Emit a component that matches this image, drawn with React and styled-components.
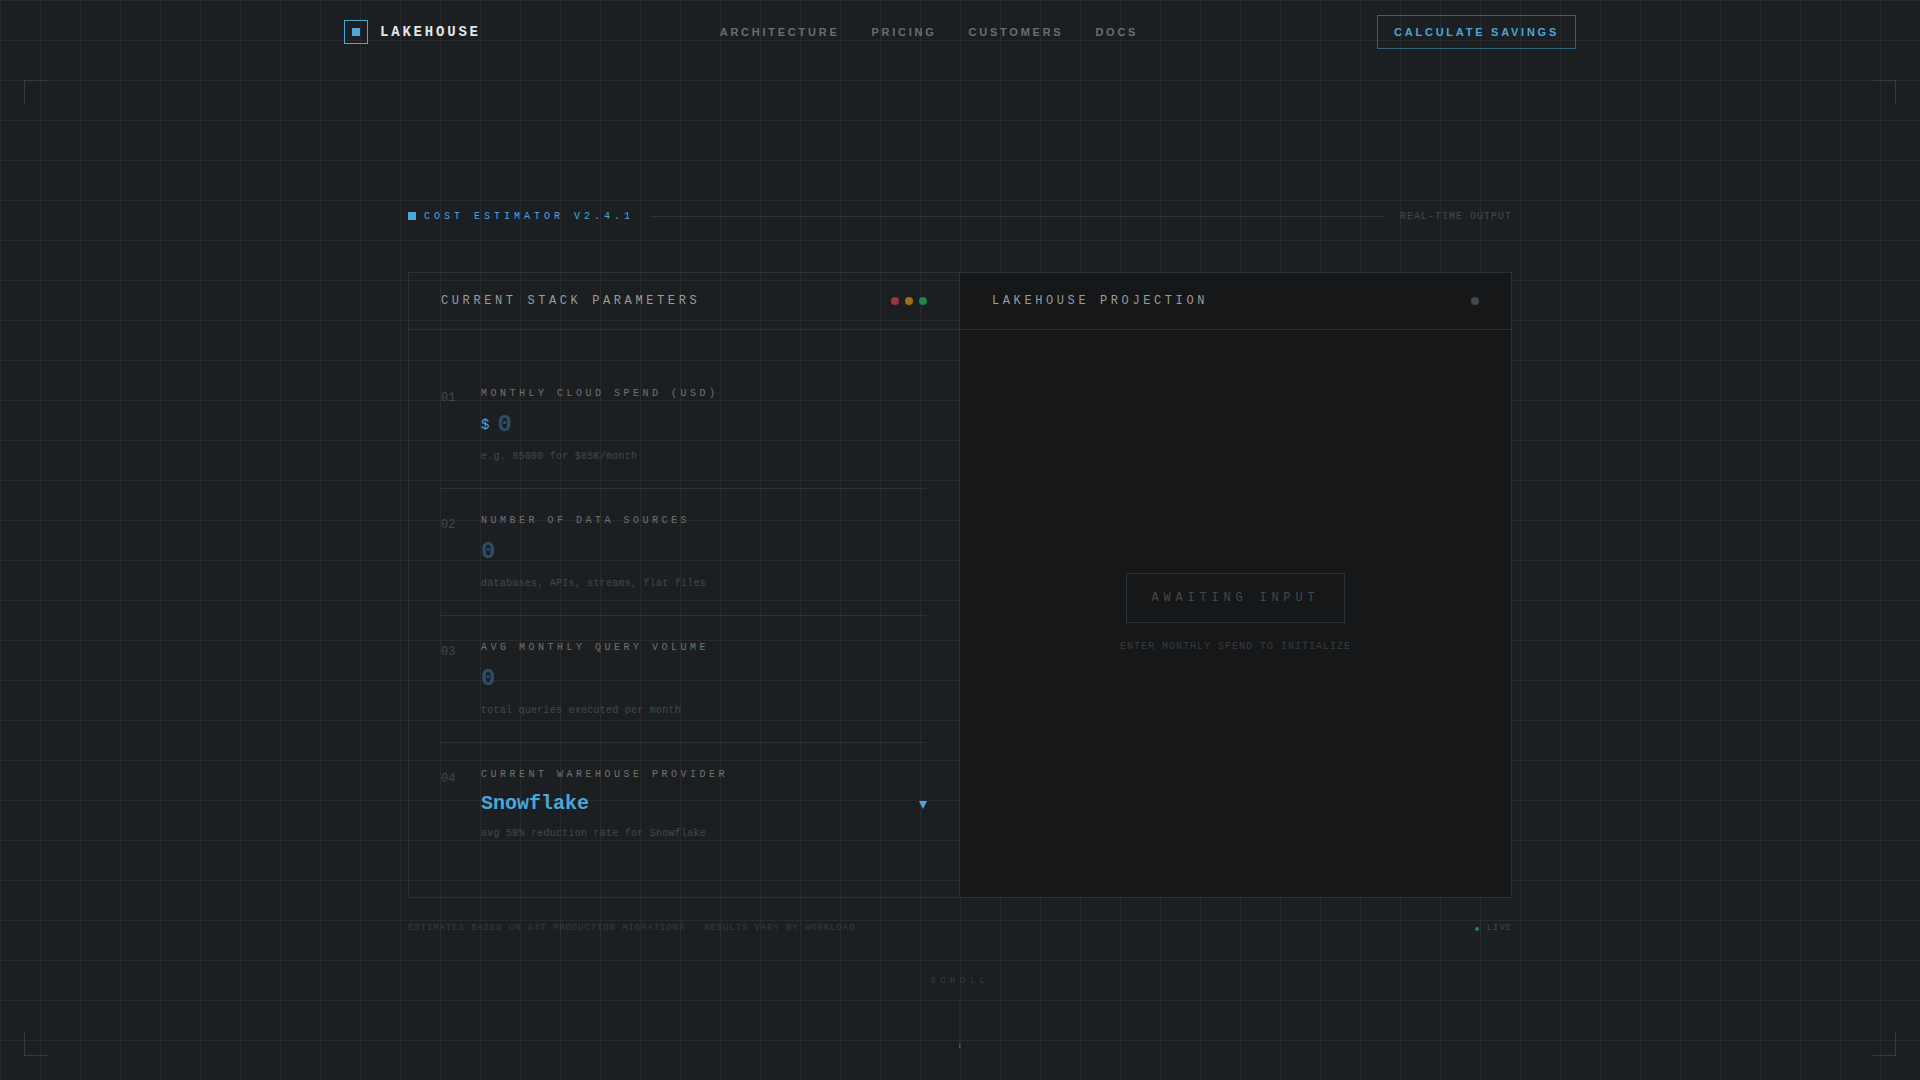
import { useState } from "react";
import styled, { createGlobalStyle } from "styled-components";

const colors = {
  background: "#1c1f22",
  panel: "#161718",
  grid: "rgba(255, 255, 255, 0.05)",
  border: "#2f3234",
  accent: "#4ba6d9",
  accentDim: "#2c4f63",
  accentBorder: "#335f7d",
  white: "#e4e6e7",
  title: "#999c9c",
  label: "#707374",
  nav: "#6b6e70",
  muted: "#45484a",
  faint: "#393c3e",
};

const mono = `"Liberation Mono", monospace`;
const sans = `"Liberation Sans", sans-serif`;

const links = ["Architecture", "Pricing", "Customers", "Docs"];

const fields = [
  {
    id: "spend",
    label: "Monthly cloud spend (USD)",
    hint: "e.g. 85000 for $85K/month",
    prefix: "$",
  },
  {
    id: "sources",
    label: "Number of data sources",
    hint: "databases, APIs, streams, flat files",
  },
  {
    id: "queries",
    label: "Avg monthly query volume",
    hint: "total queries executed per month",
  },
];

const providers = {
  Snowflake: 58,
  BigQuery: 52,
  Redshift: 61,
  Databricks: 47,
};

export default function App() {
  const [values, setValues] = useState({ spend: "", sources: "", queries: "" });
  const [provider, setProvider] = useState("Snowflake");

  const changeHandler = (id, value) => {
    setValues({ ...values, [id]: value });
  };

  return (
    <>
      <GlobalStyle />
      <Page>
        <Header>
          <Brand href="#">
            <LogoBox>
              <Square />
            </LogoBox>
            Lakehouse
          </Brand>
          <Nav>
            {links.map((link) => (
              <NavLink key={link} href={`#${link.toLowerCase()}`}>
                {link}
              </NavLink>
            ))}
          </Nav>
          <SavingsButton type="button">Calculate savings</SavingsButton>
        </Header>

        <Corner $top $left />
        <Corner $top />
        <Corner $left />
        <Corner />

        <Main>
          <Estimator>
            <SectionBar>
              <SectionName>
                <Square />
                Cost estimator v2.4.1
              </SectionName>
              <Rule />
              <SectionNote>Real-time output</SectionNote>
            </SectionBar>

            <Panels>
              <Panel $divided>
                <PanelHeader>
                  <PanelTitle>Current stack parameters</PanelTitle>
                  <Dots>
                    <Dot $color="#9a363c" />
                    <Dot $color="#a06e1b" />
                    <Dot $color="#1f8346" />
                  </Dots>
                </PanelHeader>
                <Form>
                  {fields.map((field, key) => (
                    <Field key={field.id}>
                      <Index>{`0${key + 1}`}</Index>
                      <FieldBody>
                        <Label htmlFor={field.id}>{field.label}</Label>
                        <Control>
                          {field.prefix && <Prefix>{field.prefix}</Prefix>}
                          <Input
                            id={field.id}
                            inputMode="numeric"
                            placeholder="0"
                            value={values[field.id]}
                            onChange={(e) =>
                              changeHandler(field.id, e.target.value)
                            }
                          />
                        </Control>
                        <Hint>{field.hint}</Hint>
                      </FieldBody>
                    </Field>
                  ))}
                  <Field>
                    <Index>04</Index>
                    <FieldBody>
                      <Label htmlFor="provider">
                        Current warehouse provider
                      </Label>
                      <Control>
                        <Select
                          id="provider"
                          value={provider}
                          onChange={(e) => setProvider(e.target.value)}
                        >
                          {Object.keys(providers).map((name) => (
                            <option key={name}>{name}</option>
                          ))}
                        </Select>
                        <Arrow viewBox="0 0 8 10" aria-hidden="true">
                          <path d="M0 2H8L4 10Z" />
                        </Arrow>
                      </Control>
                      <Hint>
                        {`avg ${providers[provider]}% reduction rate for ${provider}`}
                      </Hint>
                    </FieldBody>
                  </Field>
                </Form>
              </Panel>

              <Panel $filled>
                <PanelHeader>
                  <PanelTitle>Lakehouse projection</PanelTitle>
                  <Dot $color="#45484a" />
                </PanelHeader>
                <Projection>
                  <Awaiting>Awaiting input</Awaiting>
                  <AwaitingNote>Enter monthly spend to initialize</AwaitingNote>
                </Projection>
              </Panel>
            </Panels>

            <Footnote>
              <span>
                Estimates based on 847 production migrations · Results vary by
                workload
              </span>
              <Live>
                <Dot $small $color="#2b8256" />
                Live
              </Live>
            </Footnote>
          </Estimator>
        </Main>

        <Scroll>
          Scroll
          <ScrollLine />
        </Scroll>
      </Page>
    </>
  );
}

const GlobalStyle = createGlobalStyle`
  * {
    box-sizing: border-box;
  }
  body {
    margin: 0;
    background: ${colors.background};
    font-family: ${mono};
    line-height: 1.5;
  }
`;

const Page = styled.div`
  position: relative;
  display: flex;
  flex-direction: column;
  min-height: 100vh;
  background-image: linear-gradient(${colors.grid} 1px, transparent 1px),
    linear-gradient(90deg, ${colors.grid} 1px, transparent 1px);
  background-size: 40px 40px;
`;

const Header = styled.header`
  display: flex;
  align-items: center;
  justify-content: space-between;
  width: 100%;
  max-width: 1280px;
  height: 64px;
  margin: 0 auto;
  padding: 0 24px;
`;

const Brand = styled.a`
  display: flex;
  align-items: center;
  gap: 12px;
  color: ${colors.white};
  font-size: 14px;
  font-weight: 700;
  line-height: 20px;
  letter-spacing: 0.2em;
  text-decoration: none;
  text-transform: uppercase;
`;

const LogoBox = styled.span`
  display: flex;
  align-items: center;
  justify-content: center;
  width: 24px;
  height: 24px;
  border: 1px solid ${colors.accent};
`;

const Square = styled.span`
  width: 8px;
  height: 8px;
  background: ${colors.accent};
`;

const Nav = styled.nav`
  display: flex;
  gap: 32px;
`;

const NavLink = styled.a`
  color: ${colors.nav};
  font-family: ${sans};
  font-size: 11px;
  font-weight: 700;
  line-height: 16px;
  letter-spacing: 0.25em;
  text-decoration: none;
  text-transform: uppercase;
`;

const SavingsButton = styled.button`
  padding: 8px 16px;
  border: 1px solid ${colors.accentBorder};
  background: transparent;
  color: ${colors.accent};
  font-family: ${sans};
  font-size: 11px;
  font-weight: 700;
  line-height: 16px;
  letter-spacing: 0.25em;
  text-transform: uppercase;
  cursor: pointer;
`;

/* brackets in the four corners of the hero */
const Corner = styled.span`
  position: absolute;
  ${(props) => (props.$top ? "top: 80px" : "bottom: 24px")};
  ${(props) => (props.$left ? "left: 24px" : "right: 24px")};
  width: 24px;
  height: 24px;
  border: 0 solid #363a3b;
  ${(props) => (props.$top ? "border-top-width" : "border-bottom-width")}: 1px;
  ${(props) => (props.$left ? "border-left-width" : "border-right-width")}: 1px;
`;

const Main = styled.main`
  display: flex;
  flex: 1;
  align-items: center;
  justify-content: center;
`;

const Estimator = styled.section`
  width: 100%;
  max-width: 1152px;
  padding: 0 24px;
`;

const SectionBar = styled.div`
  display: flex;
  align-items: center;
  gap: 16px;
  margin-bottom: 48px;
  font-size: 10px;
  text-transform: uppercase;
`;

const SectionName = styled.span`
  display: flex;
  align-items: center;
  gap: 8px;
  color: ${colors.accent};
  letter-spacing: 0.4em;
`;

const Rule = styled.span`
  flex: 1;
  height: 1px;
  background: ${colors.border};
`;

const SectionNote = styled.span`
  color: ${colors.muted};
  letter-spacing: 0.1em;
`;

const Panels = styled.div`
  display: grid;
  grid-template-columns: 1fr 1fr;
  border: 1px solid ${colors.border};
`;

const Panel = styled.div`
  display: flex;
  flex-direction: column;
  border-right: ${(props) => (props.$divided ? 1 : 0)}px solid ${colors.border};
  background: ${(props) => (props.$filled ? colors.panel : "transparent")};
`;

const PanelHeader = styled.div`
  display: flex;
  align-items: center;
  justify-content: space-between;
  padding: 20px 32px;
  border-bottom: 1px solid ${colors.border};
`;

const PanelTitle = styled.h2`
  margin: 0;
  color: ${colors.title};
  font-size: 12px;
  font-weight: 400;
  line-height: 16px;
  letter-spacing: 0.3em;
  text-transform: uppercase;
`;

const Dots = styled.div`
  display: flex;
  gap: 6px;
`;

const Dot = styled.span`
  width: ${(props) => (props.$small ? 4 : 8)}px;
  height: ${(props) => (props.$small ? 4 : 8)}px;
  border-radius: 50%;
  background: ${(props) => props.$color};
`;

const Form = styled.form`
  padding: 32px;
`;

const Field = styled.div`
  display: flex;
  gap: 16px;
  padding: 24px 0;
  border-bottom: 1px solid ${colors.border};

  &:last-child {
    border-bottom: 0;
  }
`;

const Index = styled.span`
  width: 24px;
  padding-top: 4px;
  color: ${colors.muted};
  font-size: 12px;
  line-height: 16px;
`;

const FieldBody = styled.div`
  flex: 1;
`;

const Label = styled.label`
  display: block;
  color: ${colors.label};
  font-size: 10px;
  letter-spacing: 0.35em;
  text-transform: uppercase;
`;

const Control = styled.div`
  display: flex;
  align-items: center;
  gap: 8px;
  margin: 8px 0;
`;

const Prefix = styled.span`
  color: ${colors.accent};
  font-size: 14px;
  line-height: 20px;
`;

const Input = styled.input`
  flex: 1;
  width: 100%;
  height: 32px;
  padding: 0;
  border: 0;
  outline: 0;
  background: transparent;
  color: ${colors.accent};
  font-family: ${mono};
  font-size: 24px;
  font-weight: 700;
  line-height: 32px;

  &::placeholder {
    color: ${colors.accentDim};
  }
`;

const Select = styled.select`
  flex: 1;
  height: 28px;
  padding: 0;
  border: 0;
  outline: 0;
  appearance: none;
  background: transparent;
  color: ${colors.accent};
  font-family: ${mono};
  font-size: 20px;
  font-weight: 700;
  line-height: 28px;
  cursor: pointer;
`;

const Arrow = styled.svg`
  width: 8px;
  height: 10px;
  fill: ${colors.accent};
`;

const Hint = styled.p`
  margin: 0;
  color: ${colors.muted};
  font-size: 10px;
  letter-spacing: 0.025em;
`;

const Projection = styled.div`
  display: flex;
  flex: 1;
  flex-direction: column;
  align-items: center;
  justify-content: center;
  gap: 16px;
  padding: 32px;
  text-transform: uppercase;
`;

const Awaiting = styled.div`
  padding: 16px 24px;
  border: 1px solid ${colors.border};
  color: ${colors.muted};
  font-size: 12px;
  line-height: 16px;
  letter-spacing: 0.4em;
`;

const AwaitingNote = styled.p`
  margin: 0;
  color: ${colors.faint};
  font-size: 10px;
  letter-spacing: 0.1em;
`;

const Footnote = styled.div`
  display: flex;
  align-items: center;
  justify-content: space-between;
  margin-top: 24px;
  color: ${colors.faint};
  font-size: 9px;
  letter-spacing: 0.1em;
  text-transform: uppercase;
`;

const Live = styled.span`
  display: flex;
  align-items: center;
  gap: 8px;
  color: ${colors.muted};
`;

/* floats over the bottom edge of the hero */
const Scroll = styled.div`
  position: absolute;
  bottom: 32px;
  left: 50%;
  display: flex;
  flex-direction: column;
  align-items: center;
  gap: 12px;
  color: ${colors.faint};
  font-size: 9px;
  line-height: 14px;
  letter-spacing: 0.5em;
  text-transform: uppercase;
  transform: translateX(-50%);
`;

const ScrollLine = styled.span`
  width: 1px;
  height: 48px;
  background: linear-gradient(#292d2f 44px, #5c7078 44px);
`;
